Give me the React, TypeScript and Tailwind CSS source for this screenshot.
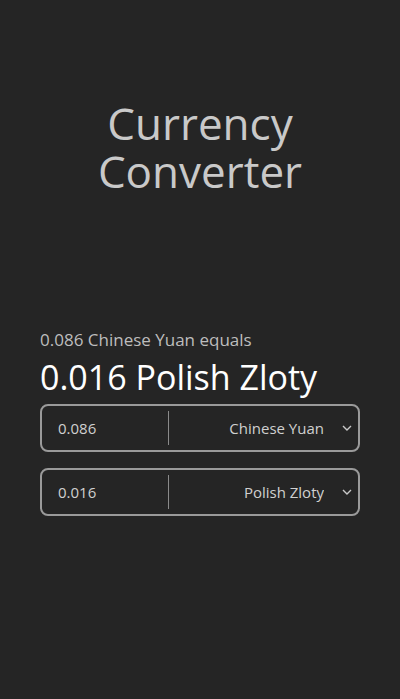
import { useState } from "react";

const currencies = ["Chinese Yuan", "Polish Zloty", "US Dollar", "Euro"];

const Row = ({ value, currency }: { value: string; currency: string }) => {
  return (
    <div className="flex h-[48px] w-full items-center rounded-lg border-2 border-[#9a9a9a]">
      <input
        className="h-full w-[126px] bg-transparent pl-4 text-[15px] text-[#d0d0d0] outline-none"
        defaultValue={value}
      />
      <div className="h-[34px] w-px bg-[#8a8a8a]" />
      <div className="relative flex h-full flex-1 items-center">
        <select
          className="h-full w-full appearance-none bg-transparent pr-[34px] text-right text-[15px] text-[#d0d0d0] outline-none"
          defaultValue={currency}
          dir="rtl"
        >
          {currencies.map((c) => (
            <option key={c} value={c} className="bg-[#252525]">
              {c}
            </option>
          ))}
        </select>
        <svg
          className="pointer-events-none absolute right-[6px] top-1/2 -translate-y-1/2"
          width="10"
          height="6"
          viewBox="0 0 10 6"
          fill="none"
          stroke="#c8c8c8"
          strokeWidth="1.4"
        >
          <path d="M1 1l4 4 4-4" />
        </svg>
      </div>
    </div>
  );
};

const App = () => {
  const [from] = useState("0.086");
  const [to] = useState("0.016");
  return (
    <div
      className="flex min-h-[699px] w-full flex-col bg-[#252525] px-10"
      style={{ fontFamily: '"Open Sans", "Noto Sans", sans-serif' }}
    >
      <h1 className="mt-[99px] text-center text-[44px] leading-[48px] text-[#c9c9c9]">
        Currency
        <br />
        Converter
      </h1>
      <p className="mt-[134px] text-[17px] leading-[22px] text-[#bdbdbd]">
        {from} Chinese Yuan equals
      </p>
      <p className="mt-[6px] text-[34px] leading-[40px] text-white">
        {to} Polish Zloty
      </p>
      <div className="mt-[7px] flex flex-col gap-4">
        <Row value={from} currency="Chinese Yuan" />
        <Row value={to} currency="Polish Zloty" />
      </div>
    </div>
  );
};

export default App;
